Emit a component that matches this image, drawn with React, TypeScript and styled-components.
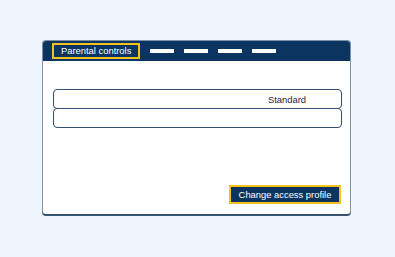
import React from "react";
import styled, { createGlobalStyle } from "styled-components";

const Global = createGlobalStyle`
  html, body { margin: 0; padding: 0; }
  body {
    background: #eef5fc;
    font-family: "Liberation Sans", Arial, sans-serif;
    width: 395px;
    height: 257px;
    overflow: hidden;
  }
`;

const Page = styled.div`
  padding: 40px 0 0 42px;
`;

const Window = styled.div`
  box-sizing: border-box;
  width: 309px;
  height: 175px;
  background: #ffffff;
  border: 1px solid #7d90a6;
  border-bottom-color: #2f4c6c;
  border-radius: 4px;
  box-shadow: 0 1px 0 #3c5878;
  display: flex;
  flex-direction: column;
  overflow: hidden;
`;

const Header = styled.div`
  height: 21px;
  margin: -1px -1px 0;
  background: #0b3560;
  display: flex;
  align-items: center;
  padding-left: 10px;
  gap: 10px;
`;

const Tab = styled.div`
  box-sizing: border-box;
  height: 16px;
  width: 88px;
  border: 2px solid #f4c21f;
  color: #ffffff;
  font-size: 9.4px;
  line-height: 12px;
  padding-left: 7px;
  display: flex;
  align-items: center;
  white-space: nowrap;
`;

const Dashes = styled.div`
  display: flex;
  gap: 10px;
  align-items: center;
`;

const Dash = styled.div`
  width: 24px;
  height: 4px;
  background: #ffffff;
`;

const Body = styled.div`
  flex: 1;
  display: flex;
  flex-direction: column;
  padding: 28px 8px 10px 10px;
`;

const Row = styled.div<{ $first?: boolean }>`
  box-sizing: border-box;
  height: 20px;
  border: 1px solid #34506f;
  border-radius: 4px;
  margin-top: ${(p) => (p.$first ? "0" : "-1px")};
  display: flex;
  align-items: center;
  justify-content: flex-end;
  padding-right: 35px;
  color: #1b2838;
  font-size: 9.4px;
  background: #ffffff;
`;

const Footer = styled.div`
  margin-top: auto;
  display: flex;
  justify-content: flex-end;
  padding-right: 1px;
`;

const Button = styled.button`
  box-sizing: border-box;
  width: 112px;
  height: 19px;
  background: #0b3560;
  border: 2px solid #f4c21f;
  color: #ffffff;
  font-family: "Liberation Sans", Arial, sans-serif;
  font-size: 9.4px;
  padding: 0;
  display: flex;
  align-items: center;
  justify-content: center;
  cursor: pointer;
`;

export default function App() {
  return (
    <>
      <Global />
      <Page>
        <Window>
          <Header>
            <Tab>Parental controls</Tab>
            <Dashes>
              <Dash />
              <Dash />
              <Dash />
              <Dash />
            </Dashes>
          </Header>
          <Body>
            <Row $first>Standard</Row>
            <Row />
            <Footer>
              <Button>Change access profile</Button>
            </Footer>
          </Body>
        </Window>
      </Page>
    </>
  );
}
